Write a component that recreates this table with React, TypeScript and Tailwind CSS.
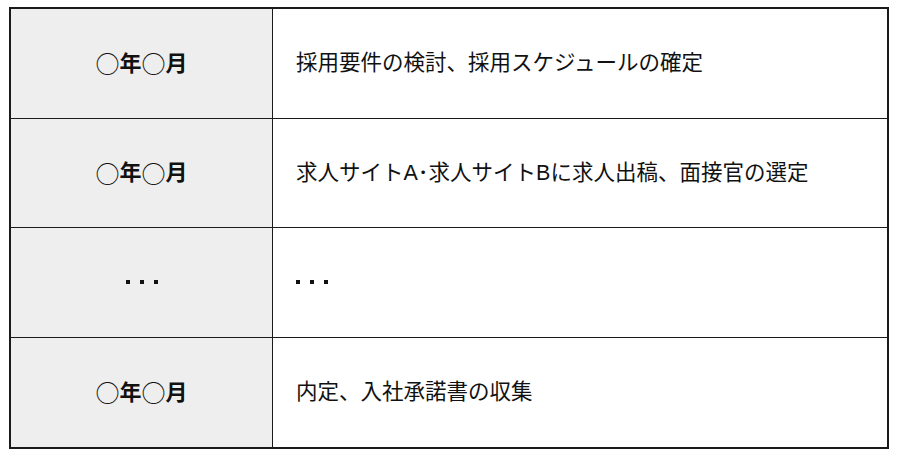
const rows = [
  { date: true, task: "採用要件の検討、採用スケジュールの確定" },
  { date: true, task: "求人サイトA･求人サイトBに求人出稿、面接官の選定" },
  { date: false, task: null },
  { date: true, task: "内定、入社承諾書の収集" },
];

function Dots() {
  return (
    <span className="flex items-center gap-[10px]">
      <span className="w-[4px] h-[4px] bg-[#111]" />
      <span className="w-[4px] h-[4px] bg-[#111]" />
      <span className="w-[4px] h-[4px] bg-[#111]" />
    </span>
  );
}

function DateLabel() {
  return (
    <span className="text-[22px] font-bold flex items-center">
      <span className="font-normal text-[24px] font-['Noto_Sans_CJK_JP',sans-serif]">○</span>
      <span>年</span>
      <span className="font-normal text-[24px] font-['Noto_Sans_CJK_JP',sans-serif]">○</span>
      <span>月</span>
    </span>
  );
}

export default function App() {
  return (
    <div
      className="w-[900px] h-[462px] bg-white pt-[7px] pl-[9px] text-[#111]"
      style={{ fontFamily: '"Liberation Sans", "Noto Sans CJK JP", sans-serif' }}
    >
      <div className="w-[880px] h-[442px] border-2 border-[#1a1a1a] grid grid-cols-[262px_1fr] grid-rows-4">
        {rows.map((row, i) => {
          const last = i === rows.length - 1;
          return (
            <div key={i} className="contents">
              <div
                className={
                  "bg-[#eeeeee] border-r border-[#1a1a1a] flex items-center justify-center " +
                  (last ? "" : "border-b")
                }
              >
                {row.date ? <DateLabel /> : <Dots />}
              </div>
              <div
                className={
                  "flex items-center pl-[23px] border-[#1a1a1a] " + (last ? "" : "border-b")
                }
              >
                {row.task ? <span className="text-[21.5px]">{row.task}</span> : <Dots />}
              </div>
            </div>
          );
        })}
      </div>
    </div>
  );
}
